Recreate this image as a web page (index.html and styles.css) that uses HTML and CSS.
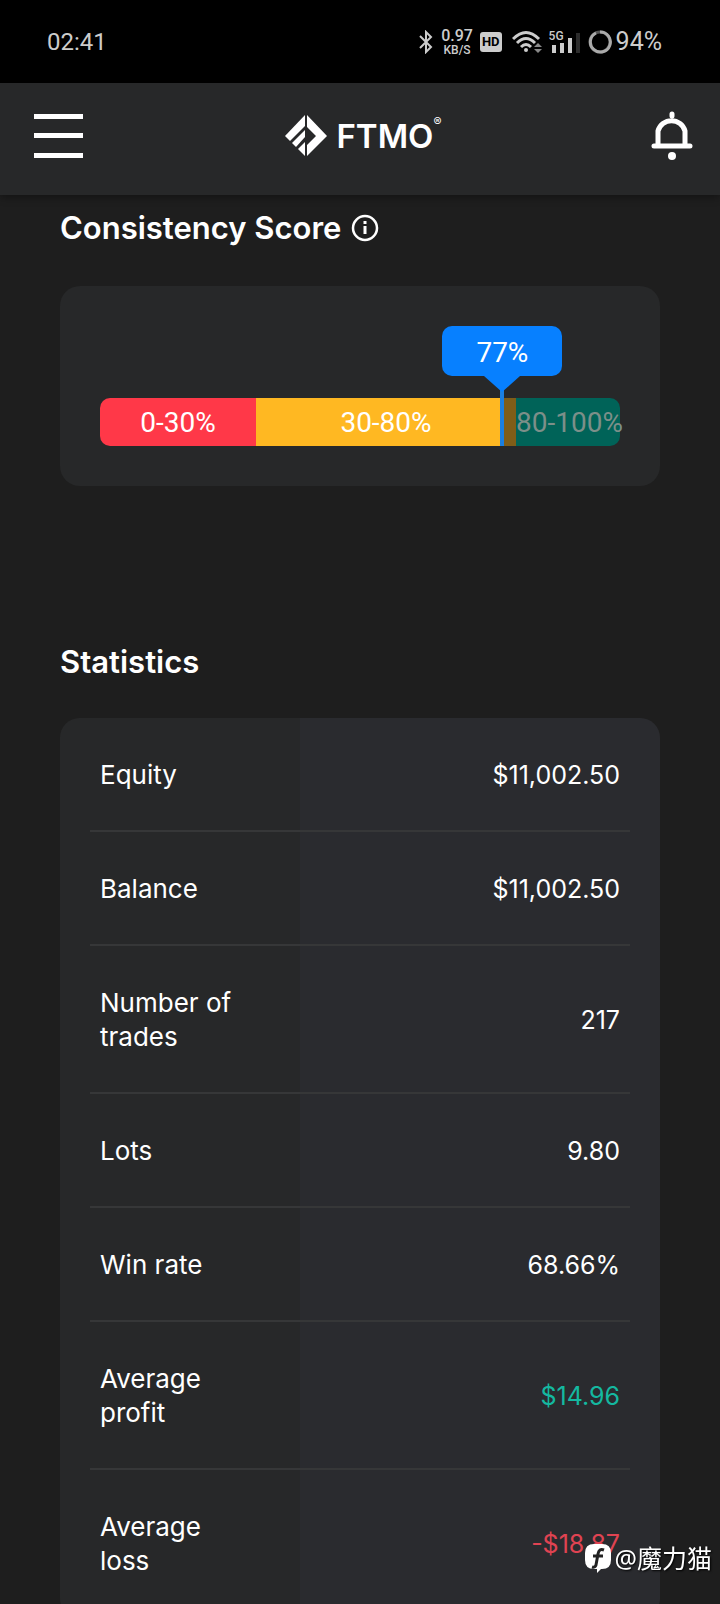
FILE: index.html
```
<!DOCTYPE html>
<html lang="en">
<head>
  <meta charset="UTF-8">
  <meta name="viewport" content="width=device-width, initial-scale=1">
  <title>FTMO - Statistics</title>
  <link rel="stylesheet" href="styles.css">
</head>
<body>

  <div class="status-bar">
    <span class="clock">02:41</span>
    <div class="status-icons">
      <svg class="bluetooth" width="14" height="24" viewBox="0 0 14 24" fill="none" stroke="#ccc" stroke-width="2">
        <path d="M1 6l11 11-5 5V2l5 5L1 18"/>
      </svg>
      <div class="net-speed"><b>0.97</b><small>KB/S</small></div>
      <span class="hd">HD</span>
      <svg class="wifi" width="31" height="24" viewBox="0 0 31 24" fill="none" stroke="#ccc" stroke-width="3">
        <path d="M1 9Q14 -4 27 9M5 13Q14 4 23 13M9 17Q14 12 19 17"/>
        <circle cx="14" cy="20" r="2" fill="#ccc" stroke="none"/>
        <path d="M22 17l4-4 4 4zM22 19l4 4 4-4z" fill="#888" stroke="none"/>
      </svg>
      <div class="signal">
        <span>5G</span>
        <svg width="32" height="24" viewBox="0 0 32 24" fill="#ccc">
          <path d="M3 15h4v8H3zM11 13h4v10h-4zM19 8h4v15h-4z"/>
          <path d="M27 3h4v20h-4z" fill="#2c2c2c"/>
        </svg>
      </div>
      <svg class="battery" width="24" height="24" viewBox="0 0 24 24" fill="none" stroke-width="3">
        <circle cx="12" cy="12" r="10" stroke="#555"/>
        <path d="M12 2a10 10 0 1 1-4 1" stroke="#aaa"/>
      </svg>
      <span class="percent">94%</span>
    </div>
  </div>

  <header>
    <button class="icon-btn" aria-label="Menu">
      <svg width="50" height="44" viewBox="0 0 50 44" fill="#fff">
        <path d="M0 0h49v5H0zM0 19h49v5H0zM0 39h49v5H0z"/>
      </svg>
    </button>
    <a class="logo" href="#">
      <svg width="42" height="42" viewBox="0 0 42 42" fill="#fff">
        <path d="M20 0v11L5 26 0 21z"/>
        <path d="M20 15v7L11 32l-4-4z"/>
        <path d="M20 27v14l-7-7z"/>
        <path d="M22 0l20 21-20 20V30l9-9-9-9z"/>
      </svg>
      <span>FTMO</span><sup>®</sup>
    </a>
    <button class="icon-btn bell" aria-label="Notifications">
      <svg width="42" height="50" viewBox="0 0 42 50" fill="none" stroke="#fff" stroke-width="5" stroke-linecap="round">
        <path d="M3 35h36M7 35V20a14 14 0 0 1 27 0v15M21 3v2"/>
        <circle cx="21" cy="45" r="4" fill="#fff" stroke="none"/>
      </svg>
    </button>
  </header>

  <main>
    <section class="consistency">
      <h2>Consistency Score
        <svg width="28" height="28" viewBox="0 0 28 28" fill="none" stroke="#fff">
          <circle cx="14" cy="14" r="12" stroke-width="2.5"/>
          <path d="M14 12v8M14 7v3" stroke-width="3"/>
        </svg>
      </h2>
      <div class="score-card">
        <div class="score-bar">
          <div class="range low">0-30%</div>
          <div class="range mid">30-80%</div>
          <div class="range high">80-100%</div>
          <div class="shade" style="left:77%"></div>
          <div class="marker" style="left:77%">
            <div class="bubble">77%</div>
          </div>
        </div>
      </div>
    </section>

    <section class="statistics">
      <h2>Statistics</h2>
      <div class="stats-card">
        <table>
          <tr><th scope="row">Equity</th><td>$11,002.50</td></tr>
          <tr><th scope="row">Balance</th><td>$11,002.50</td></tr>
          <tr><th scope="row">Number of trades</th><td>217</td></tr>
          <tr><th scope="row">Lots</th><td>9.80</td></tr>
          <tr><th scope="row">Win rate</th><td>68.66%</td></tr>
          <tr><th scope="row">Average profit</th><td class="profit">$14.96</td></tr>
          <tr><th scope="row">Average loss</th><td class="loss">-$18.87</td></tr>
        </table>
      </div>
    </section>
  </main>

  <div class="watermark">
    <svg width="26" height="29" viewBox="0 0 26 29">
      <path d="M9 0h8q9 0 9 9v7q0 9-9 9h-1l-4 4v-4H9q-9 0-9-9V9q0-9 9-9z" fill="#fff"/>
      <path d="M19 6q-5-2-6 4l-2 11q-1 3-4 2M8 12h10" fill="none" stroke="#222" stroke-width="3"/>
    </svg>
    <span>@魔力猫</span>
  </div>

</body>
</html>
```
FILE: styles.css
```
* {
  box-sizing: border-box;
}

body {
  font-family: Inter, "Noto Sans", sans-serif;
  background: #1e1e1e;
  color: #fff;
  margin: 0;
  height: 100vh;
  overflow: hidden;
}

.status-bar {
  background: #000;
  color: #ccc;
  height: 83px;
  padding: 0 58px 0 47px;
  display: flex;
  justify-content: space-between;
  align-items: center;
  font-family: Roboto, sans-serif;
}

.clock {
  font-size: 24px;
}

.percent {
  font-size: 25px;
  margin-left: 4px;
}

.status-icons {
  display: flex;
  align-items: center;
}

.net-speed {
  display: flex;
  flex-direction: column;
  align-items: center;
  margin: 0 7px 0 8px;
}

.net-speed b {
  font-size: 16px;
  font-weight: 500;
  line-height: 16px;
}

.net-speed small {
  font-size: 12px;
  font-weight: 500;
  line-height: 12px;
}

.hd {
  background: #ccc;
  color: #000;
  border-radius: 3px;
  padding: 0 2px;
  font-size: 13px;
  font-weight: 700;
  line-height: 20px;
}

.wifi {
  margin: 0 6px 0 10px;
}

.signal {
  position: relative;
  display: flex;
  margin-right: 7px;
}

.signal span {
  position: absolute;
  top: 0;
  left: 0;
  font-size: 12px;
  font-weight: 500;
  line-height: 12px;
}

header {
  position: relative;
  background: #272829;
  height: 112px;
  padding: 0 27px 6px 34px;
  display: grid;
  grid-template-columns: 1fr auto 1fr;
  align-items: center;
  box-shadow: 0 2px 8px rgba(0,0,0,0.4);
}

.icon-btn {
  background: none;
  border: none;
  padding: 0;
  display: flex;
  cursor: pointer;
}

.bell {
  justify-self: end;
}

.logo {
  display: flex;
  align-items: center;
  color: #fff;
  text-decoration: none;
}

.logo span {
  font-size: 33px;
  font-weight: 600;
  margin-left: 9px;
}

.logo sup {
  font-size: 12px;
  align-self: flex-start;
  line-height: 14px;
}

main {
  padding: 0 60px;
}

h2 {
  font-size: 31px;
  font-weight: 600;
  line-height: 40px;
  margin: 0;
  display: flex;
  align-items: center;
  gap: 10px;
}

.consistency {
  padding-top: 13px;
}

.score-card {
  background: #272829;
  border-radius: 20px;
  margin-top: 38px;
  padding: 112px 40px 40px;
}

.score-bar {
  position: relative;
  display: flex;
  height: 48px;
  font-family: Roboto, sans-serif;
  font-size: 28px;
  line-height: 50px;
  text-align: center;
}

.range {
  min-width: 0;
  white-space: nowrap;
}

.low {
  flex: 0 0 30%;
  background: #ff3848;
  border-radius: 10px 0 0 10px;
}

.mid {
  flex: 0 0 50%;
  background: #ffb822;
}

.high {
  flex: 0 0 20%;
  background: #006358;
  color: #7c8f89;
  border-radius: 0 10px 10px 0;
}

/* part of the middle range the score has not reached */
.shade {
  position: absolute;
  top: 0;
  bottom: 0;
  right: 20%;
  background: #7f5d18;
}

.marker {
  position: absolute;
  top: -24px;
  bottom: 0;
  width: 4px;
  background: #1b7fe0;
}

.bubble {
  position: absolute;
  bottom: 100%;
  left: 50%;
  width: 120px;
  height: 50px;
  margin-left: -60px;
  margin-bottom: -2px;
  line-height: 54px;
  background: #0780ff;
  border-radius: 10px;
}

.bubble::after {
  content: "";
  position: absolute;
  top: 100%;
  left: 50%;
  margin-left: -18px;
  border: 18px solid transparent;
  border-top: 16px solid #0780ff;
  border-bottom: 0;
}

.statistics {
  padding-top: 156px;
}

.stats-card {
  background: linear-gradient(to right, #272829 40%, #2a2b2f 40%);
  border-radius: 20px;
  margin-top: 36px;
  padding: 0 30px;
}

table {
  width: 100%;
  border-collapse: collapse;
}

th, td {
  font-size: 25px;
  font-weight: 400;
  line-height: 34px;
  padding: 40px 10px 38px;
  border-bottom: 2px solid #363738;
}

th {
  width: 39%;
  padding-right: 60px;
  font-size: 26px;
  text-align: left;
}

td {
  text-align: right;
}

.profit {
  color: #14b8a0;
}

.loss {
  color: #e04352;
}

.watermark {
  position: fixed;
  right: 8px;
  bottom: 28px;
  display: flex;
  align-items: center;
  gap: 4px;
  font-family: "Noto Sans", "Noto Sans CJK SC", sans-serif;
  font-size: 25px;
  line-height: 36px;
  text-shadow: 1px 1px 2px #000;
}
```
